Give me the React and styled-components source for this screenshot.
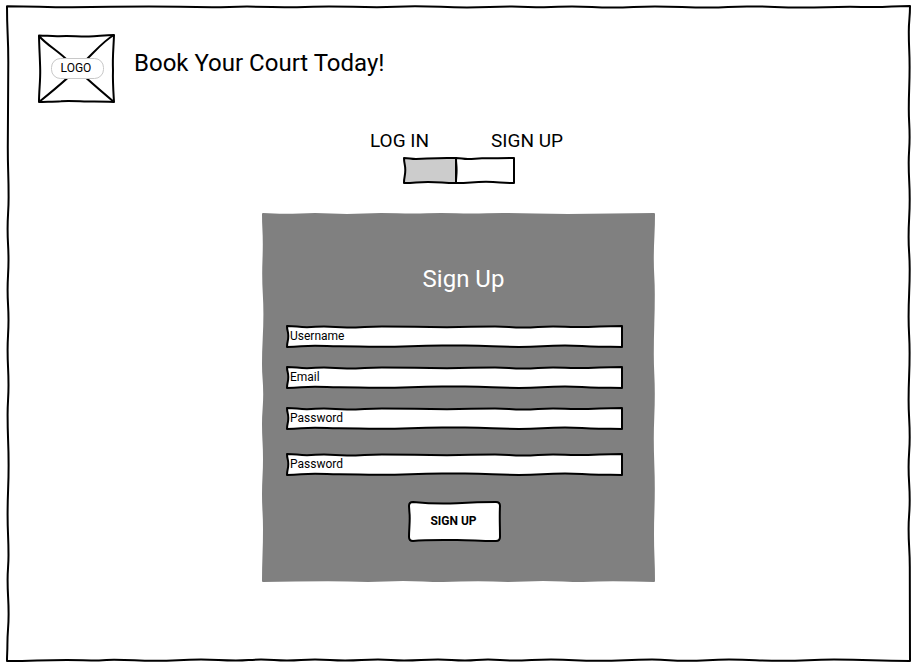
import React, { useState } from "react";
import styled, { createGlobalStyle } from "styled-components";

const GlobalStyle = createGlobalStyle`
  *, *::before, *::after { box-sizing: border-box; }
  body {
    margin: 0;
    background: #fff;
    color: #000;
    font-family: Roboto, "Liberation Sans", sans-serif;
  }
`;

/* ---- hand-drawn outlines ---- */

const SketchSvg = styled.svg`
  position: absolute;
  inset: 0;
  width: 100%;
  height: 100%;
  overflow: visible;
  pointer-events: none;

  path {
    vector-effect: non-scaling-stroke;
  }
`;

// Joins the points with soft S-curves along the given axis.
function wave(points, axis) {
  let d = "";
  for (let i = 1; i < points.length; i++) {
    const [x0, y0] = points[i - 1];
    const [x1, y1] = points[i];
    if (axis === "x") {
      const m = (x0 + x1) / 2;
      d += `C${m} ${y0} ${m} ${y1} ${x1} ${y1}`;
    } else {
      const m = (y0 + y1) / 2;
      d += `C${x0} ${m} ${x1} ${m} ${x1} ${y1}`;
    }
  }
  return d;
}

function Sketch({ shape, fill = "none", stroke = "#000" }) {
  const { w, h, top, right, bottom, left } = shape;
  const d =
    `M${top[0][0]} ${top[0][1]}` +
    wave(top, "x") +
    wave(right, "y") +
    wave([...bottom].reverse(), "x") +
    wave([...left].reverse(), "y") +
    "Z";
  return (
    <SketchSvg viewBox={`0 0 ${w} ${h}`} preserveAspectRatio="none" aria-hidden="true">
      <path d={d} fill={fill} stroke={stroke} strokeWidth="2" strokeLinejoin="round" />
    </SketchSvg>
  );
}

const frameShape = {
  w: 903,
  h: 654,
  top: [[0, -0.8], [65, 0.3], [142, -0.6], [205, 0.3], [240, -0.4], [290, 0.3], [322, -0.6], [370, 0.2], [408, -0.7], [460, 0.4], [505, -0.5], [537, 0.3], [565, -0.6], [605, 0.4], [648, -0.6], [702, 0.4], [740, -0.6], [795, 0.5], [843, -0.2], [866, 0], [903, -1]],
  right: [[903, -1], [901.8, 25], [902.6, 60], [901.8, 102], [902.6, 130], [901.7, 156], [902.7, 192], [901.6, 230], [902.7, 262], [901.6, 310], [902.6, 346], [901.6, 393], [902.7, 430], [901.6, 460], [902.7, 493], [901.6, 522], [902.8, 560], [903, 654]],
  bottom: [[0, 654], [60, 653], [92, 653.4], [107, 652.7], [148, 653.8], [194, 652.6], [229, 653.6], [254, 652.6], [280, 653.6], [308, 652.6], [338, 653.6], [371, 652.6], [397, 653.6], [431, 652.6], [458, 653.6], [481, 652.6], [505, 653.6], [544, 652.6], [591, 653.7], [645, 652.6], [679, 653.7], [722, 652.6], [775, 653.7], [827, 652.6], [903, 654]],
  left: [[0, -0.8], [1.3, 55], [0.8, 140], [1.6, 190], [0.6, 222], [1.5, 253], [0.6, 283], [1.5, 313], [0.6, 343], [1.5, 378], [0.6, 408], [1.6, 458], [0.6, 508], [1.5, 548], [0.6, 573], [1.6, 607], [0.4, 638], [0, 654]],
};

const fieldShape = {
  w: 335,
  h: 21,
  top: [[0, 0], [20, 1.2], [37, 0.5], [60, 1.4], [95, 0.4], [160, 1.2], [208, 0.5], [236, 1.6], [266, 0.5], [290, 1.1], [335, 0]],
  right: [[335, 0], [335, 21]],
  bottom: [[0, 21], [28, 19.7], [52, 20.2], [92, 20.8], [155, 19.6], [178, 19.6], [232, 20.9], [278, 19.5], [312, 20.7], [335, 21]],
  left: [[0, 0], [1.3, 10], [0, 21]],
};

const panelShape = {
  w: 391,
  h: 367,
  top: [[0, 0], [22, 0.8], [52, 0], [84, 0.9], [118, 0], [150, 0.6], [178, 0], [208, 0.6], [240, 0], [305, 0.9], [391, 0]],
  right: [[391, 0], [389.8, 45], [390.8, 80], [389.8, 140], [390.8, 180], [389.8, 225], [390.8, 275], [390, 320], [391, 367]],
  bottom: [[0, 367], [65, 366.2], [105, 366.9], [140, 366], [180, 367], [215, 366.2], [245, 366.9], [280, 366], [320, 367], [350, 366.2], [391, 367]],
  left: [[0, 0], [0.8, 30], [0.2, 60], [1.4, 100], [0, 150], [1.2, 180], [0, 210], [1, 245], [0, 280], [1, 315], [0, 367]],
};

const segmentShapes = {
  login: {
    w: 52,
    h: 25,
    top: [[0, 0], [12, 1], [34, 0.2], [52, 0]],
    right: [[52, 0], [52, 25]],
    bottom: [[0, 25], [24, 24], [52, 25]],
    left: [[0, 0], [1.3, 12], [0, 25]],
  },
  signup: {
    w: 58,
    h: 25,
    top: [[0, 0], [12, 1], [26, 0.3], [58, 0]],
    right: [[58, 0], [58, 25]],
    bottom: [[0, 25], [30, 23.8], [58, 25]],
    left: [[0, 0], [0.6, 12], [0, 25]],
  },
};

const Screen = styled.div`
  display: flex;
  min-height: 100vh;
  padding: 7px 5px 7px 7px;
`;

const Frame = styled.div`
  position: relative;
  flex: 1;
  display: flex;
  flex-direction: column;
`;

const Header = styled.header`
  display: flex;
  align-items: flex-start;
  gap: 20px;
  padding: 29px 32px 0;
`;

const Logo = styled.svg`
  flex: none;
  width: 75px;
  height: 66px;
  overflow: visible;
  font-size: 12px;
`;

const Tagline = styled.h1`
  margin: 0;
  padding-top: 12px;
  font-size: 24px;
  line-height: 30px;
  font-weight: 400;
`;

const Main = styled.main`
  display: flex;
  flex-direction: column;
  align-items: center;
  padding-top: 27px;
`;

const ModeSwitch = styled.fieldset`
  display: flex;
  flex-direction: column;
  align-items: center;
  min-width: 0;
  margin: 0 0 31px;
  padding: 0 0 0 2px;
  border: 0;
`;

const ModeLabels = styled.div`
  display: flex;
  gap: 62px;
  padding-left: 14px;
  margin-bottom: 5px;
`;

const ModeLabel = styled.label`
  font-size: 19px;
  line-height: 24px;
  cursor: pointer;
`;

const Segments = styled.div`
  display: flex;
`;

const Segment = styled.span`
  position: relative;
  display: flex;
  width: ${(p) => p.$width}px;
  height: 25px;
`;

const SegmentRadio = styled.input`
  position: relative;
  appearance: none;
  width: 100%;
  height: 100%;
  margin: 0;
  cursor: pointer;
`;

const Panel = styled.form`
  position: relative;
  display: flex;
  flex-direction: column;
  width: 100%;
  max-width: 391px;
  padding: 51px 32px 40px 24px;
`;

const PanelTitle = styled.h2`
  position: relative;
  margin: 0 0 33px;
  padding-left: 18px;
  color: #fff;
  font-size: 24px;
  line-height: 28px;
  font-weight: 400;
  text-align: center;
`;

const Fields = styled.div`
  display: flex;
  flex-direction: column;
  gap: 20px;
`;

const Field = styled.div`
  position: relative;
  display: flex;
  height: 21px;
  margin-top: ${(p) => (p.$apart ? "5px" : "0")};
`;

const FieldInput = styled.input`
  position: relative;
  width: 100%;
  padding: 0 3px 2px;
  border: 0;
  outline: 0;
  background: transparent;
  color: #000;
  font: 12px/18px Roboto, "Liberation Sans", sans-serif;

  &::placeholder {
    color: #000;
    opacity: 1;
  }
`;

const SubmitButton = styled.button`
  position: relative;
  align-self: center;
  width: 91px;
  height: 39px;
  margin-top: 27px;
  padding: 0 2px 2px 0;
  border: 0;
  background: transparent;
  color: #000;
  font: 700 12px/16px Roboto, "Liberation Sans", sans-serif;
  cursor: pointer;
`;

const ButtonText = styled.span`
  position: relative;
`;

function LogoMark() {
  return (
    <Logo viewBox="0 0 75 66" role="img" aria-label="Logo">
      <g fill="none" stroke="#000" strokeWidth="2" strokeLinejoin="round">
        <path d="M0 -.6C8 -.4 12 .4 20 .2C32 -.4 38 .6 50 .4C60 0 66 -1 75 -1C74.6 12 73.4 20 74 34C73.6 46 74.4 56 75 66C64 65.6 58 65.2 48 65.6C38 65.2 30 64.4 22 65.2C14 65.8 6 65.6 0 66C0 54 1.4 46 1.2 34C1 22 .2 12 0 -.6Z" />
        <path d="M0 0C7 8 16 13 26 22C40 36 56 50 75 66" />
        <path d="M75 -1C66 4 59 12 49 22C38 34 20 50 0 66" />
      </g>
      <rect x="12.5" y="22.5" width="52" height="20" rx="9" fill="#fff" stroke="#c8c8c8" />
      <text x="37" y="36" textAnchor="middle">LOGO</text>
    </Logo>
  );
}

const modes = [
  { id: "login", label: "LOG IN", title: "Log In", width: 52 },
  { id: "signup", label: "SIGN UP", title: "Sign Up", width: 58 },
];

const fields = [
  { name: "username", type: "text", label: "Username", login: true },
  { name: "email", type: "email", label: "Email" },
  { name: "password", type: "password", label: "Password", login: true },
  { name: "passwordRepeat", type: "password", label: "Password", hint: "Repeat password", apart: true },
];

const buttonPath =
  "M4 0C20 1.6 34 2 48 1.2C62 .4 76 0 87 0Q91 0 91 4C90.4 14 91 24 91 35Q91 39 87 39C72 39.2 60 37.8 46 38C30 38.2 16 38 4 39Q0 39 0 35C0 26 1.4 18 .4 10L0 4Q0 0 4 0Z";

export default function App() {
  const [mode, setMode] = useState("signup");
  const current = modes.find((m) => m.id === mode);
  const shown = fields.filter((f) => mode === "signup" || f.login);

  return (
    <Screen>
      <GlobalStyle />
      <Frame>
        <Sketch shape={frameShape} />
        <Header>
          <LogoMark />
          <Tagline>Book Your Court Today!</Tagline>
        </Header>
        <Main>
          <ModeSwitch aria-label="Account">
            <ModeLabels>
              {modes.map((m) => (
                <ModeLabel key={m.id} htmlFor={m.id}>{m.label}</ModeLabel>
              ))}
            </ModeLabels>
            <Segments>
              {modes.map((m) => (
                <Segment key={m.id} $width={m.width}>
                  <Sketch shape={segmentShapes[m.id]} fill={m.id === mode ? "#fff" : "#ccc"} />
                  <SegmentRadio
                    type="radio"
                    name="mode"
                    id={m.id}
                    checked={m.id === mode}
                    onChange={() => setMode(m.id)}
                  />
                </Segment>
              ))}
            </Segments>
          </ModeSwitch>
          <Panel onSubmit={(e) => e.preventDefault()}>
            <Sketch shape={panelShape} fill="#808080" stroke="#808080" />
            <PanelTitle>{current.title}</PanelTitle>
            <Fields>
              {shown.map((f) => (
                <Field key={f.name} $apart={f.apart}>
                  <Sketch shape={fieldShape} fill="#fff" />
                  <FieldInput
                    type={f.type}
                    name={f.name}
                    placeholder={f.label}
                    aria-label={f.hint || f.label}
                  />
                </Field>
              ))}
            </Fields>
            <SubmitButton type="submit">
              <SketchSvg viewBox="0 0 91 39" preserveAspectRatio="none" aria-hidden="true">
                <path d={buttonPath} fill="#fff" stroke="#000" strokeWidth="2" />
              </SketchSvg>
              <ButtonText>{current.label}</ButtonText>
            </SubmitButton>
          </Panel>
        </Main>
      </Frame>
    </Screen>
  );
}
